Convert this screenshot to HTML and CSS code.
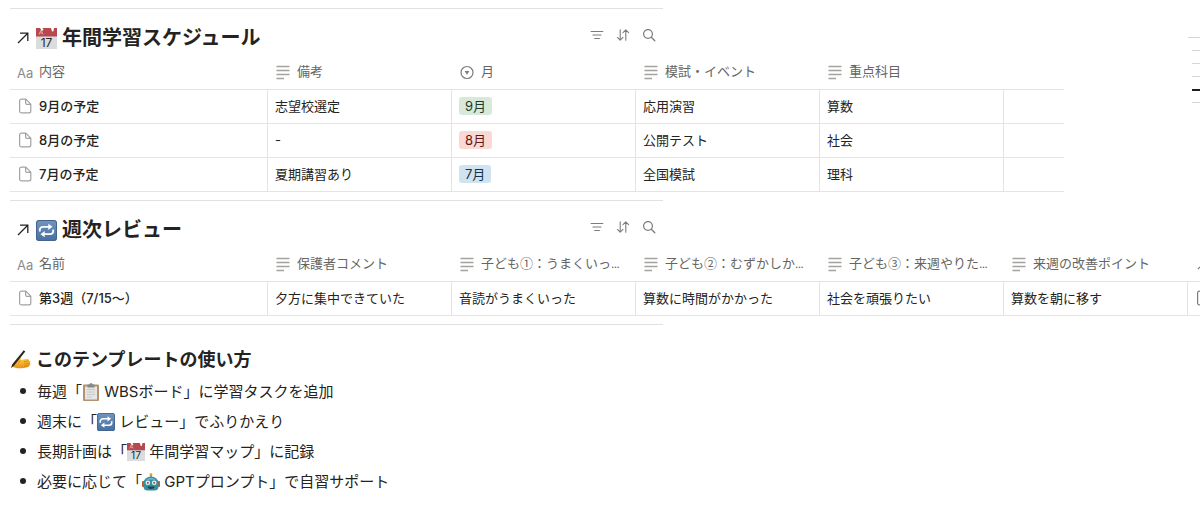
FILE: index.html
```
<!DOCTYPE html>
<html lang="ja">

<head>
	<meta charset="UTF-8">
	<meta name="viewport" content="width=device-width, initial-scale=1.0">
	<title>年間学習スケジュール</title>
	<link rel="stylesheet" href="styles.css">
</head>

<body>
	<!-- Shared icons -->
	<svg class="sprite" aria-hidden="true">
		<defs>
			<linearGradient id="blue" x1="0" y1="0" x2="0" y2="1">
				<stop offset="0" stop-color="#7395be" />
				<stop offset="1" stop-color="#456fa3" />
			</linearGradient>
			<linearGradient id="skin" x1="0" y1="0" x2="0" y2="1">
				<stop offset="0" stop-color="#ffd147" />
				<stop offset="1" stop-color="#e99113" />
			</linearGradient>
		</defs>
		<symbol id="i-open" viewBox="0 0 12 12">
			<path d="M1 11 10.500 1.500M3 1.200h7.800V9" fill="none" stroke="currentColor" stroke-width="1.300" />
		</symbol>
		<symbol id="i-text" viewBox="0 0 16 16">
			<path d="M1.500 2.500h13M1.500 6.500h13M1.500 10.500h13M1.500 14.500h7.500" fill="none" stroke="currentColor" stroke-width="1.400" />
		</symbol>
		<symbol id="i-select" viewBox="0 0 16 16">
			<circle cx="8" cy="8.500" r="6" fill="none" stroke="currentColor" stroke-width="1.200" />
			<path d="M5.600 7h4.800L8 10.800z" fill="currentColor" />
		</symbol>
		<symbol id="i-relation" viewBox="0 0 16 16">
			<path d="M3 13 13 3M5 3h8v8" fill="none" stroke="currentColor" stroke-width="1.200" />
		</symbol>
		<symbol id="i-page" viewBox="0 0 16 16">
			<path d="M4.500 1.100h4.300l5 5v6.900a1.900 1.900 0 0 1-1.900 1.900H4.500A1.900 1.900 0 0 1 2.600 13V3a1.900 1.900 0 0 1 1.900-1.900zM8.600 1.300v3.600a1.400 1.400 0 0 0 1.400 1.400h3.600" fill="none" stroke="currentColor" stroke-width="1.200" stroke-linejoin="round" />
		</symbol>
		<symbol id="i-filter" viewBox="0 0 14 14">
			<path d="M1.200 3.500h11.600M3 7h8M4.700 10.500h4.600" fill="none" stroke="currentColor" stroke-width="1.200" stroke-linecap="round" />
		</symbol>
		<symbol id="i-sort" viewBox="0 0 14 14">
			<path d="M4.200 1.800v10.400M1.400 9.400l2.800 2.800L7 9.400M9.800 12.200V1.800M7 4.600l2.800-2.800 2.800 2.800" fill="none" stroke="currentColor" stroke-width="1.100" stroke-linecap="round" stroke-linejoin="round" />
		</symbol>
		<symbol id="i-search" viewBox="0 0 14 14">
			<circle cx="6" cy="6" r="4.400" fill="none" stroke="currentColor" stroke-width="1.200" />
			<path d="m9.300 9.300 3.500 3.500" fill="none" stroke="currentColor" stroke-width="1.300" stroke-linecap="round" />
		</symbol>
		<symbol id="i-calendar" viewBox="0 0 21 21">
			<path d="M0 0h21v21H0z" fill="#dadcde" />
			<path d="M0 0h21v8.500H0z" fill="#b5494e" />
			<path d="M3 6.500 5 2l2 4.500M4 5h2" fill="none" stroke="#e7b9bb" stroke-width=".8" />
			<path d="M4 0h2.500l1 2-1.500 1zM15 0h3l-.5 3.200-1.500.3z" fill="#fff" />
			<text x="10.500" y="19" text-anchor="middle" font-family="Inter, sans-serif" font-size="12" font-weight="400" fill="#26282b">17</text>
		</symbol>
		<symbol id="i-repeat" viewBox="0 0 21 21">
			<rect width="21" height="21" rx="3" fill="url(#blue)" />
			<rect x=".5" y=".5" width="20" height="20" rx="2.500" fill="none" stroke="#456489" />
			<path d="M3.800 11.500V10A3.200 3.200 0 0 1 7 6.800h6M17.200 9.500V11a3.200 3.200 0 0 1-3.200 3.200H8" fill="none" stroke="#fff" stroke-width="1.800" />
			<path d="M12.300 3.700v6.200L16.500 6.800zM8.700 11.100v6.200l-4.200-3.100z" fill="#fff" />
		</symbol>
		<symbol id="i-clipboard" viewBox="0 0 18 18">
			<rect x="1" y="1.500" width="16" height="16.500" rx="1" fill="#b3936f" />
			<path d="M3 3.500h12v13H3z" fill="#e5e5e3" />
			<path d="M5 6.500h8M5 9h8M5 11.500h8M5 14h5" stroke="#bfc1c2" stroke-width=".8" />
			<path d="M5.500 1.500h2a1.500 1.500 0 0 1 3 0h2v3h-7z" fill="#85898c" />
		</symbol>
		<symbol id="i-robot" viewBox="0 0 18 18">
			<circle cx="9" cy="1.600" r="1.400" fill="#e39a2c" />
			<path d="M9 2.500v2" stroke="#697b80" stroke-width="1.500" />
			<rect x="0" y="8" width="3" height="6" rx="1" fill="#bd5a34" />
			<rect x="15" y="8" width="3" height="6" rx="1" fill="#bd5a34" />
			<path d="M1.500 10a7.500 6.500 0 0 1 15 0v3.500a4 4 0 0 1-4 4h-7a4 4 0 0 1-4-4z" fill="#3590a2" />
			<path d="M4 6.500a7 4 0 0 1 10 0z" fill="#89c9d2" />
			<circle cx="5.800" cy="9.800" r="2.300" fill="#e9f5f6" />
			<circle cx="12.200" cy="9.800" r="2.300" fill="#e9f5f6" />
			<circle cx="5.800" cy="9.800" r="1.100" fill="#a2554c" />
			<circle cx="12.200" cy="9.800" r="1.100" fill="#a2554c" />
			<path d="M5.500 13.500h7a3.500 2.500 0 0 1-7 0z" fill="#1c4551" />
		</symbol>
		<symbol id="i-writing" viewBox="0 0 21 21">
			<path d="M2.500 14.500C4 11.500 6 9.500 8.500 8c1.600-.9 3-.3 2.500.8l-.7 1.400 6.700-1.500c1.600-.3 2.400 1 1.700 2 1.700-.2 2.300 1.400 1.200 2.300.9.800.6 2-.6 2.300.2 1.200-.8 1.800-2 1.900-2.300.9-5 1.300-8 1.100-3 0-4.300-.9-7.800-1.600z" fill="url(#skin)" />
			<path d="M10.300 10.200 8.500 12.500M14 11.800l4.700-1.100M14.500 14l5.400-1M14.200 16.200l5.100-.9" fill="none" stroke="#c9750c" stroke-width=".7" />
			<path d="M13.700.3 15.300 1.400 4.400 15.200.8 18.300 2.400 14.200z" fill="#292826" />
		</symbol>
	</svg>

	<main class="page">
		<section class="database">
			<div class="db-header">
				<h2 class="db-title">
					<svg class="icon-open"><use href="#i-open" /></svg>
					<svg class="emoji"><use href="#i-calendar" /></svg>
					<a href="#schedule">年間学習スケジュール</a>
				</h2>
				<div class="toolbar">
					<button type="button" aria-label="フィルター"><svg><use href="#i-filter" /></svg></button>
					<button type="button" aria-label="並べ替え"><svg><use href="#i-sort" /></svg></button>
					<button type="button" aria-label="検索"><svg><use href="#i-search" /></svg></button>
				</div>
			</div>
			<table class="db-table" id="schedule">
				<colgroup>
					<col class="col-name">
					<col class="col" span="4">
					<col class="col-end">
				</colgroup>
				<thead>
					<tr>
						<th><div class="cell"><span class="aa">Aa</span><span class="label">内容</span></div></th>
						<th><div class="cell"><svg><use href="#i-text" /></svg><span class="label">備考</span></div></th>
						<th><div class="cell"><svg class="dark"><use href="#i-select" /></svg><span class="label">月</span></div></th>
						<th><div class="cell"><svg><use href="#i-text" /></svg><span class="label">模試・イベント</span></div></th>
						<th><div class="cell"><svg><use href="#i-text" /></svg><span class="label">重点科目</span></div></th>
						<th></th>
					</tr>
				</thead>
				<tbody>
					<tr>
						<td class="name"><div class="cell"><svg><use href="#i-page" /></svg>9月の予定</div></td>
						<td>志望校選定</td>
						<td><span class="tag green">9月</span></td>
						<td>応用演習</td>
						<td>算数</td>
						<td></td>
					</tr>
					<tr>
						<td class="name"><div class="cell"><svg><use href="#i-page" /></svg>8月の予定</div></td>
						<td>-</td>
						<td><span class="tag red">8月</span></td>
						<td>公開テスト</td>
						<td>社会</td>
						<td></td>
					</tr>
					<tr>
						<td class="name"><div class="cell"><svg><use href="#i-page" /></svg>7月の予定</div></td>
						<td>夏期講習あり</td>
						<td><span class="tag blue">7月</span></td>
						<td>全国模試</td>
						<td>理科</td>
						<td></td>
					</tr>
				</tbody>
			</table>
		</section>

		<section class="database">
			<div class="db-header">
				<h2 class="db-title">
					<svg class="icon-open"><use href="#i-open" /></svg>
					<svg class="emoji"><use href="#i-repeat" /></svg>
					<a href="#review">週次レビュー</a>
				</h2>
				<div class="toolbar">
					<button type="button" aria-label="フィルター"><svg><use href="#i-filter" /></svg></button>
					<button type="button" aria-label="並べ替え"><svg><use href="#i-sort" /></svg></button>
					<button type="button" aria-label="検索"><svg><use href="#i-search" /></svg></button>
				</div>
			</div>
			<table class="db-table" id="review">
				<colgroup>
					<col class="col-name">
					<col class="col" span="6">
				</colgroup>
				<thead>
					<tr>
						<th><div class="cell"><span class="aa">Aa</span><span class="label">名前</span></div></th>
						<th><div class="cell"><svg><use href="#i-text" /></svg><span class="label">保護者コメント</span></div></th>
						<th><div class="cell"><svg><use href="#i-text" /></svg><span class="label">子ども①：うまくいったこと</span></div></th>
						<th><div class="cell"><svg><use href="#i-text" /></svg><span class="label">子ども②：むずかしかったこと</span></div></th>
						<th><div class="cell"><svg><use href="#i-text" /></svg><span class="label">子ども③：来週やりたいこと</span></div></th>
						<th><div class="cell"><svg><use href="#i-text" /></svg><span class="label">来週の改善ポイント</span></div></th>
						<th><div class="cell"><svg class="dark"><use href="#i-relation" /></svg></div></th>
					</tr>
				</thead>
				<tbody>
					<tr>
						<td class="name"><div class="cell"><svg><use href="#i-page" /></svg>第3週（7/15〜）</div></td>
						<td>夕方に集中できていた</td>
						<td>音読がうまくいった</td>
						<td>算数に時間がかかった</td>
						<td>社会を頑張りたい</td>
						<td>算数を朝に移す</td>
						<td><div class="cell"><svg class="dark"><use href="#i-page" /></svg></div></td>
					</tr>
				</tbody>
			</table>
		</section>

		<section class="guide">
			<h3><svg class="emoji"><use href="#i-writing" /></svg>このテンプレートの使い方</h3>
			<ul>
				<li>毎週「<svg><use href="#i-clipboard" /></svg> WBSボード」に学習タスクを追加</li>
				<li>週末に「<svg><use href="#i-repeat" /></svg> レビュー」でふりかえり</li>
				<li>長期計画は「<svg><use href="#i-calendar" /></svg> 年間学習マップ」に記録</li>
				<li>必要に応じて「<svg><use href="#i-robot" /></svg> GPTプロンプト」で自習サポート</li>
			</ul>
		</section>
	</main>

	<!-- Outline markers floating over the right edge -->
	<nav class="outline" aria-label="目次">
		<a class="top" href="#schedule"></a>
		<a href="#schedule"></a>
		<a href="#schedule"></a>
		<a href="#schedule"></a>
		<a class="current" href="#review"></a>
		<a href="#review"></a>
	</nav>
</body>

</html>
```
FILE: styles.css
```
* {
	box-sizing: border-box;
}

body {
	margin: 0;
	font-family: Inter, "Noto Sans CJK JP", sans-serif;
	font-size: 13px;
	line-height: 20px;
	color: #242321;
	background-color: #fff;
	position: relative;
	overflow-x: hidden;
}

a {
	color: inherit;
	text-decoration: none;
}

.sprite {
	position: absolute;
	width: 0;
	height: 0;
}

.page {
	max-width: 663px;
	padding: 8px 0 10px 10px;
}

/* Databases */
.database {
	border-top: 1px solid #e1e1df;
	padding-bottom: 8px;
}

.db-header {
	display: flex;
	justify-content: space-between;
	align-items: flex-start;
	padding: 14px 1px 4px 7px;
}

.db-title {
	display: flex;
	align-items: center;
	margin: 1px 0 0;
	font-size: 20px;
	line-height: 28px;
	font-weight: 700;
}

.icon-open {
	width: 12px;
	height: 12px;
	margin-right: 7px;
}

.emoji {
	width: 21px;
	height: 21px;
	margin-right: 5px;
}

.toolbar {
	display: flex;
}

.toolbar button {
	display: flex;
	align-items: center;
	justify-content: center;
	width: 26px;
	height: 24px;
	padding: 0;
	border: none;
	border-radius: 4px;
	background: none;
	color: #7d7c79;
	cursor: pointer;
}

.toolbar button:hover {
	background-color: #f1f1ef;
}

.toolbar svg {
	width: 14px;
	height: 14px;
}

.db-table {
	table-layout: fixed;
	width: 100%;
	border-collapse: separate;
	border-spacing: 0;
}

.col-name {
	width: 258px;
}

.col {
	width: 184px;
}

.col-end {
	width: 60px;
}

th,
td {
	height: 34px;
	padding: 0 7px 2px;
	border-bottom: 1px solid #e4e4e2;
	text-align: left;
	white-space: nowrap;
}

th {
	font-weight: 400;
	color: #666562;
}

td {
	border-right: 1px solid #e4e4e2;
}

td:last-child {
	border-right: none;
}

.name {
	font-weight: 500;
}

.cell {
	display: flex;
	align-items: center;
}

.cell svg,
.aa {
	flex: none;
	width: 16px;
	height: 16px;
	margin-right: 6px;
	color: #a3a29f;
}

.cell .dark {
	color: #7d7c79;
}

.aa {
	line-height: 18px;
	color: #8d8c89;
}

.label {
	font-family: Roboto, "Noto Sans CJK JP", sans-serif;
	overflow: hidden;
	text-overflow: ellipsis;
}

.tag {
	display: inline-block;
	padding: 0 6px;
	border-radius: 3px;
	line-height: 18px;
}

.green {
	background-color: #d8e9da;
	color: #1f3829;
}

.red {
	background-color: #fad9d5;
	color: #5d1715;
}

.blue {
	background-color: #cfe3f0;
	color: #183347;
}

/* How to use */
.guide {
	border-top: 1px solid #e1e1df;
	padding-top: 21px;
}

.guide h3 {
	display: flex;
	align-items: center;
	margin: 0 0 3px;
	font-size: 18px;
	line-height: 28px;
	font-weight: 700;
}

.guide ul {
	margin: 0;
	padding-left: 27px;
	list-style: none;
	font-size: 15px;
	line-height: 30px;
}

.guide li::before {
	content: "";
	float: left;
	width: 6px;
	height: 6px;
	margin: 11px 0 0 -17px;
	border-radius: 50%;
	background-color: #242321;
}

.guide li svg {
	width: 18px;
	height: 18px;
	vertical-align: -4px;
}

/* Outline */
.outline {
	position: absolute;
	top: 37px;
	right: 0;
	display: flex;
	flex-direction: column;
	align-items: flex-end;
}

.outline a {
	width: 8px;
	height: 13px;
	border-top: 1px solid #d6d6d4;
}

.outline .top {
	width: 12px;
}

.outline .current {
	border-top: 2px solid #1f1e1c;
}
```
